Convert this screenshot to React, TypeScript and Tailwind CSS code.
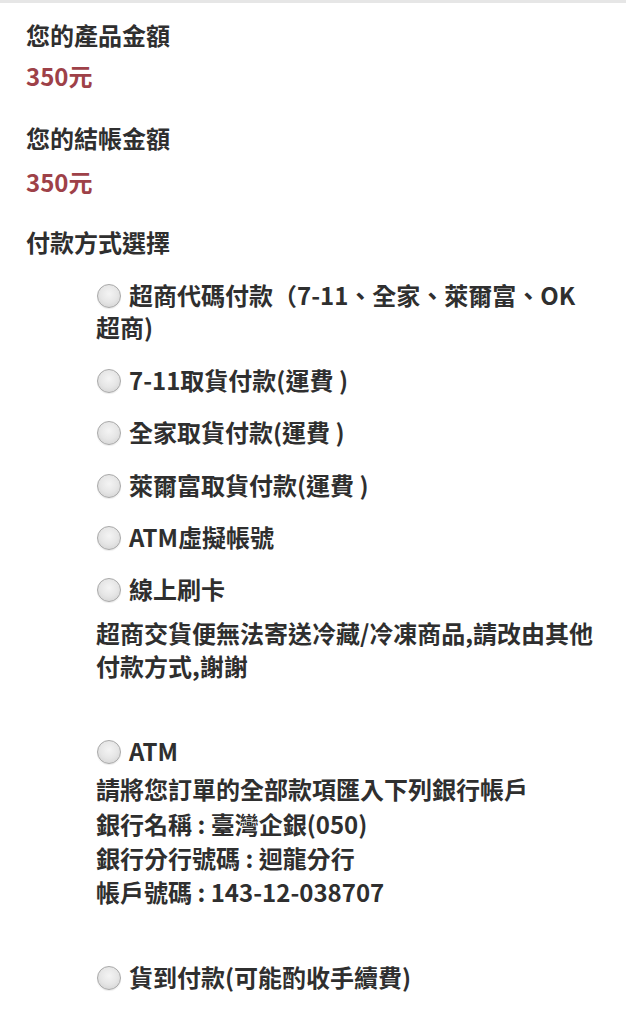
import React from "react";

const Radio = () => (
  <span
    className="inline-block w-[24px] h-[24px] rounded-full border border-[#a9a9a9] ml-[1px] mr-[8px] align-[-3px] shadow-[0_1px_1px_rgba(0,0,0,0.08)]"
    style={{ background: "radial-gradient(circle at 50% 40%, #f4f4f4 0%, #e6e6e6 50%, #cdcdcd 100%)" }}
  />
);

export default function App() {
  return (
    <div
      className="w-[626px] min-h-[1024px] bg-white text-[#2f2f2f] font-bold text-[24px]"
      style={{ fontFamily: '"Noto Sans CJK TC", "Noto Sans", sans-serif' }}
    >
      <div className="h-[3px] bg-[#e6e6e6]" />
      <div className="px-[26px] pt-[15px]">
        <div className="leading-[34px]">您的產品金額</div>
        <div className="leading-[34px] mt-[7px] text-[#9e4148]">350元</div>
        <div className="leading-[34px] mt-[28px]">您的結帳金額</div>
        <div className="leading-[34px] mt-[10px] text-[#9e4148]">350元</div>
        <div className="leading-[34px] mt-[26px]">付款方式選擇</div>
      </div>
      <div className="pl-[96px] pr-[16px] mt-[20px]">
        <div className="leading-[32px]">
          <Radio />
          超商代碼付款（7-11、全家、萊爾富、OK
          <br />
          超商)
        </div>
        <div className="leading-[32px] mt-[21px]">
          <Radio />
          7-11取貨付款(運費 )
        </div>
        <div className="leading-[32px] mt-[20px]">
          <Radio />
          全家取貨付款(運費 )
        </div>
        <div className="leading-[32px] mt-[21px]">
          <Radio />
          萊爾富取貨付款(運費 )
        </div>
        <div className="leading-[32px] mt-[20px]">
          <Radio />
          ATM虛擬帳號
        </div>
        <div className="leading-[32px] mt-[20px]">
          <Radio />
          線上刷卡
        </div>
        <div className="leading-[33px] mt-[11px]">
          超商交貨便無法寄送冷藏/冷凍商品,請改由其他
          <br />
          付款方式,謝謝
        </div>
        <div className="leading-[34px] mt-[52px]">
          <Radio />
          ATM
        </div>
        <div className="leading-[34px] mt-[4px]">請將您訂單的全部款項匯入下列銀行帳戶</div>
        <div className="leading-[34px] mt-[1px]">銀行名稱 : 臺灣企銀(050)</div>
        <div className="leading-[34px]">銀行分行號碼 : 迴龍分行</div>
        <div className="leading-[34px]">帳戶號碼 : 143-12-038707</div>
        <div className="leading-[34px] mt-[51px]">
          <Radio />
          貨到付款(可能酌收手續費)
        </div>
      </div>
    </div>
  );
}
